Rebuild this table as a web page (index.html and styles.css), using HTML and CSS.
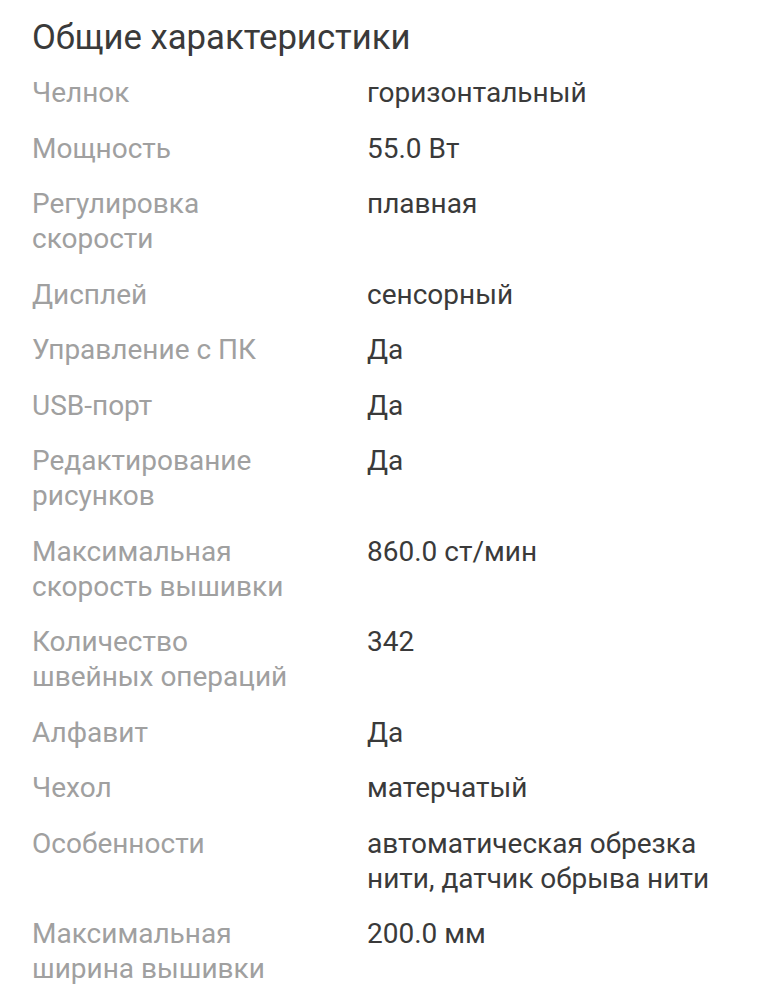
FILE: index.html
```
<!DOCTYPE html>
<html lang="ru">
<head>
<meta charset="utf-8">
<link rel="stylesheet" href="styles.css">
</head>
<body>
<section class="specs">
  <h2 class="specs-title">Общие характеристики</h2>
  <dl class="specs-list">
    <div class="row"><dt>Челнок</dt><dd>горизонтальный</dd></div>
    <div class="row"><dt>Мощность</dt><dd>55.0 Вт</dd></div>
    <div class="row"><dt>Регулировка скорости</dt><dd>плавная</dd></div>
    <div class="row"><dt>Дисплей</dt><dd>сенсорный</dd></div>
    <div class="row"><dt>Управление с ПК</dt><dd>Да</dd></div>
    <div class="row"><dt>USB-порт</dt><dd>Да</dd></div>
    <div class="row"><dt>Редактирование рисунков</dt><dd>Да</dd></div>
    <div class="row"><dt>Максимальная скорость вышивки</dt><dd>860.0 ст/мин</dd></div>
    <div class="row"><dt>Количество швейных операций</dt><dd>342</dd></div>
    <div class="row"><dt>Алфавит</dt><dd>Да</dd></div>
    <div class="row"><dt>Чехол</dt><dd>матерчатый</dd></div>
    <div class="row"><dt>Особенности</dt><dd>автоматическая обрезка нити, датчик обрыва нити</dd></div>
    <div class="row"><dt>Максимальная ширина вышивки</dt><dd>200.0 мм</dd></div>
  </dl>
</section>
</body>
</html>
```
FILE: styles.css
```
html, body {
  margin: 0;
  padding: 0;
  background: #ffffff;
}
body {
  font-family: Roboto, "Noto Sans", sans-serif;
  -webkit-font-smoothing: antialiased;
}
.specs {
  padding: 16px 32px 0 32px;
}
.specs-title {
  margin: 0;
  font-size: 34.7px;
  font-weight: 400;
  line-height: 42px;
  color: #3a3a3a;
}
.specs-list {
  margin: 17px 0 0 0;
  display: flex;
  flex-direction: column;
  gap: 20.5px;
}
.row {
  display: grid;
  grid-template-columns: 335px 1fr;
}
.row dt, .row dd {
  margin: 0;
  font-size: 28px;
  line-height: 35px;
}
.row dt {
  color: #a0a0a0;
  padding-right: 65px;
}
.row dd {
  color: #3a3a3a;
}
```
